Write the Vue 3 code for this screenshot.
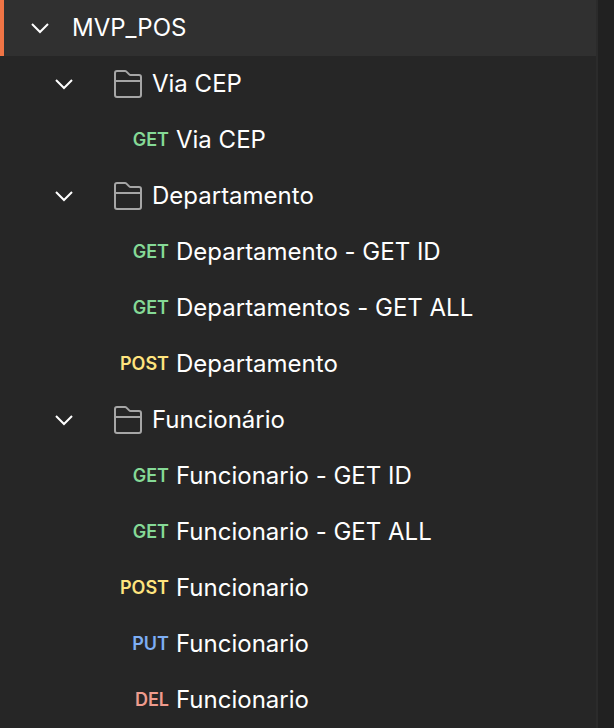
<script setup>
import { reactive } from 'vue'

const collection = reactive({
  name: 'MVP_POS',
  open: true,
  folders: [
    {
      name: 'Via CEP',
      open: true,
      requests: [{ method: 'GET', name: 'Via CEP' }],
    },
    {
      name: 'Departamento',
      open: true,
      requests: [
        { method: 'GET', name: 'Departamento - GET ID' },
        { method: 'GET', name: 'Departamentos - GET ALL' },
        { method: 'POST', name: 'Departamento' },
      ],
    },
    {
      name: 'Funcionário',
      open: true,
      requests: [
        { method: 'GET', name: 'Funcionario - GET ID' },
        { method: 'GET', name: 'Funcionario - GET ALL' },
        { method: 'POST', name: 'Funcionario' },
        { method: 'PUT', name: 'Funcionario' },
        { method: 'DEL', name: 'Funcionario' },
      ],
    },
  ],
})
</script>

<template>
  <div class="workspace">
    <nav class="sidebar">
      <button
        type="button"
        class="row collection"
        :aria-expanded="collection.open"
        @click="collection.open = !collection.open"
      >
        <svg class="chevron" :class="{ closed: !collection.open }" viewBox="0 0 24 24" aria-hidden="true">
          <path d="M4 8 L12 16 L20 8" />
        </svg>
        <span class="name">{{ collection.name }}</span>
      </button>

      <ul v-if="collection.open" class="list">
        <li v-for="folder in collection.folders" :key="folder.name">
          <button
            type="button"
            class="row folder"
            :aria-expanded="folder.open"
            @click="folder.open = !folder.open"
          >
            <svg class="chevron" :class="{ closed: !folder.open }" viewBox="0 0 24 24" aria-hidden="true">
              <path d="M4 8 L12 16 L20 8" />
            </svg>
            <svg class="folder-icon" viewBox="0 0 32 32" aria-hidden="true">
              <path d="M3 27V5a2 2 0 0 1 2-2h8a2 2 0 0 1 1.4.6L17.2 6.4a2 2 0 0 0 1.4.6H27a2 2 0 0 1 2 2v18a2 2 0 0 1-2 2H5a2 2 0 0 1-2-2z" />
              <path d="M3 13H29" />
            </svg>
            <span class="name">{{ folder.name }}</span>
          </button>

          <ul v-if="folder.open" class="list">
            <li v-for="request in folder.requests" :key="request.method + request.name">
              <button type="button" class="row request">
                <span class="method" :class="request.method.toLowerCase()">{{ request.method }}</span>
                <span class="name">{{ request.name }}</span>
              </button>
            </li>
          </ul>
        </li>
      </ul>
    </nav>
  </div>
</template>

<style>
body {
  margin: 0;
  background: #212121;
}
</style>

<style scoped>
.workspace {
  min-height: 100vh;
  display: flex;
  padding-right: 16px;
  box-sizing: border-box;
  background: #212121;
  font-family: Inter, "Liberation Sans", sans-serif;
}

.sidebar {
  flex: 1;
  min-width: 0;
  background: #262626;
  border-right: 2px solid #2b2b2b;
}

.list {
  list-style: none;
  margin: 0;
  padding: 0;
}

.row {
  display: flex;
  align-items: center;
  width: 100%;
  height: 56px;
  margin: 0;
  padding: 0;
  border: 0;
  background: transparent;
  color: #ffffff;
  font: inherit;
  font-size: 24px;
  line-height: 32px;
  font-feature-settings: "calt" 0;
  text-align: left;
  cursor: pointer;
}

.collection {
  gap: 20px;
  padding-left: 24px;
  border-left: 4px solid #ef7445;
  background: #303030;
}

.folder {
  gap: 8px;
  padding-left: 52px;
}

.request {
  gap: 7px;
}

.chevron {
  flex: none;
  width: 24px;
  height: 24px;
  fill: none;
  stroke: #ffffff;
  stroke-width: 2;
}

.chevron.closed {
  transform: rotate(-90deg);
}

.folder-icon {
  flex: none;
  width: 32px;
  height: 32px;
  margin-left: 28px;
  fill: none;
  stroke: #a6a6a6;
  stroke-width: 2;
}

.name {
  white-space: nowrap;
  overflow: hidden;
  text-overflow: ellipsis;
}

.method {
  flex: none;
  width: 169px;
  font-size: 18px;
  font-weight: 600;
  text-align: right;
}

.get {
  color: #85d996;
}

.post {
  color: #ffe47e;
}

.put {
  color: #7daef5;
}

.del {
  color: #ee9b8d;
}
</style>
